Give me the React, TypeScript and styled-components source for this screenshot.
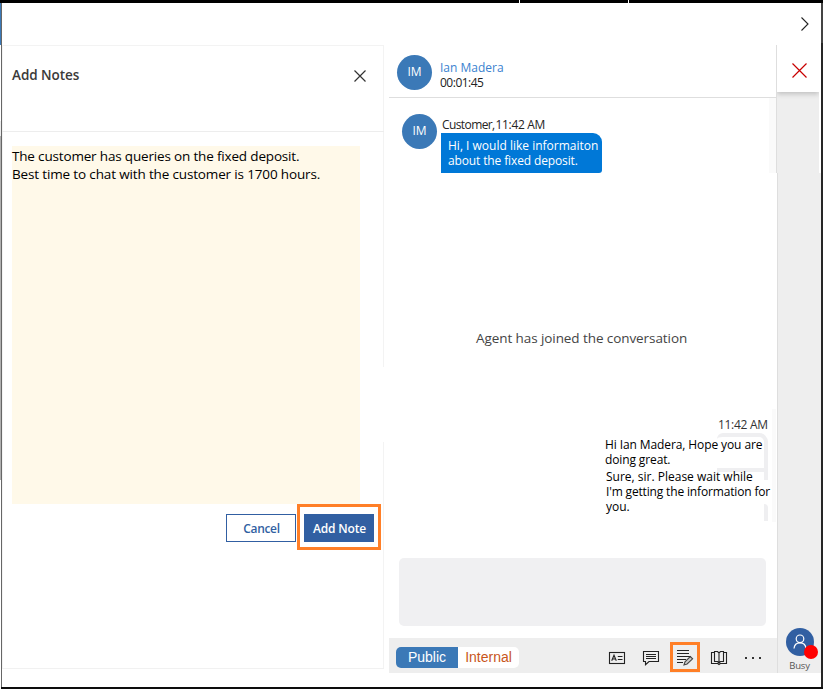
import React from 'react';
import styled, { createGlobalStyle, css } from 'styled-components';

const GlobalStyle = createGlobalStyle`
  *, *::before, *::after { box-sizing: border-box; }
  body { margin: 0; background: #fff; overflow: hidden; }
  button { padding: 0; margin: 0; border: 0; background: none; font: inherit; color: inherit; }
`;

const Window = styled.div`
  width: 823px;
  height: 689px;
  display: flex;
  flex-direction: column;
  background: #fff;
  color: #000;
  font: 12px/16px 'Open Sans', 'Noto Sans', sans-serif;
`;

const TitleStrip = styled.div`
  height: 3px;
  flex: none;
  display: flex;
  gap: 1px;
`;
const StripPart = styled.div<{ $w?: number }>`
  background: #000;
  ${({ $w }) => ($w ? `width: ${$w}px;` : 'flex: 1;')}
`;
const BottomStrip = styled.div`
  height: 2px;
  flex: none;
  margin-left: 1px;
  background: #0d0d0d;
`;

const Body = styled.div`
  height: 684px;
  display: flex;
`;
const LeftEdge = styled.div`
  width: 2px;
  border-right: 1px solid #666;
  background: linear-gradient(#3b79b7 0 42px, #fff 42px 118px, #ececec 118px 133px, #b0b0b0 133px 477px, #fff 477px);
`;
const RightEdge = styled.div`
  width: 2px;
  background: linear-gradient(#444 0 40px, #262626 40px);
`;
const Content = styled.div`
  width: 819px;
  display: flex;
  flex-direction: column;
`;
const TopBar = styled.header`
  height: 42px;
  flex: none;
  display: flex;
  justify-content: flex-end;
  align-items: center;
  padding-right: 10px;
`;
const Workspace = styled.div`
  flex: 1;
  display: flex;
  align-items: flex-start;
`;

const NotesPanel = styled.section`
  width: 382px;
  height: 624px;
  display: flex;
  flex-direction: column;
  border-top: 1px solid #f3f3f3;
  border-bottom: 1px solid #f1f1f1;
  background:
    linear-gradient(#f3f3f3, #f3f3f3) left / 1px 100% no-repeat,
    linear-gradient(#f3f3f3 0 321px, transparent 321px 396px, #f3f3f3 396px) right / 1px 100% no-repeat;
`;
const NotesHeader = styled.header`
  height: 86px;
  flex: none;
  display: flex;
  justify-content: space-between;
  align-items: flex-start;
  padding: 20px 17px 0 10px;
  border-bottom: 1px solid #ededed;
`;
const NotesTitle = styled.h1`
  margin: 0;
  font-size: 13.5px;
  line-height: 18px;
  font-weight: 600;
  letter-spacing: -0.05px;
  color: #3b3a39;
`;
const CloseNotes = styled.button`
  width: 13px;
  height: 13px;
  margin-top: 4px;
  display: flex;
`;
const NotesField = styled.div`
  width: 348px;
  height: 358px;
  margin: 14px 0 0 10px;
  padding-top: 1px;
  background: #fff9e9;
  font-size: 13.5px;
  line-height: 18px;
`;
const Line = styled.div<{ $ls?: number }>`
  white-space: nowrap;
  letter-spacing: ${({ $ls = 0 }) => $ls}px;
`;
const NotesActions = styled.div`
  display: flex;
  justify-content: flex-end;
  align-items: flex-start;
  gap: 1px;
  padding-right: 3px;
`;
const actionButton = css`
  width: 70px;
  height: 28px;
  padding-top: 2px;
  font-size: 12px;
  font-weight: 600;
  white-space: nowrap;
`;
const CancelButton = styled.button`
  ${actionButton}
  margin-top: 10px;
  padding-left: 1px;
  border: 1px solid #315fa2;
  letter-spacing: -0.35px;
  color: #315fa2;
`;
const AddHighlight = styled.div`
  width: 84px;
  height: 46px;
  display: flex;
  justify-content: center;
  padding-top: 7px;
  border: 3px solid #ff7f27;
`;
const AddButton = styled.button`
  ${actionButton}
  padding-left: 1px;
  background: #315fa2;
  letter-spacing: -0.15px;
  color: #fff;
`;

const ChatColumn = styled.section`
  width: 387px;
  height: 628px;
  margin-left: 5px;
  display: flex;
  flex-direction: column;
`;
const ChatHeader = styled.header`
  height: 53px;
  flex: none;
  display: flex;
  align-items: flex-start;
  gap: 8px;
  padding: 10px 0 0 8px;
  border-bottom: 1px solid #dedede;
`;
const Avatar = styled.div`
  width: 35px;
  height: 35px;
  flex: none;
  border-radius: 50%;
  background: #3b79b7;
  color: #fff;
  line-height: 34px;
  text-align: center;
`;
const ContactInfo = styled.div`
  padding-top: 5px;
  line-height: 15px;
`;
const ContactName = styled.div`
  color: #3a82cf;
`;
const Timer = styled.div`
  letter-spacing: -0.5px;
  line-height: 16px;
  color: #222;
`;
const Transcript = styled.div`
  position: relative;
  height: 460px;
  flex: none;
`;
const ScrollTrace = styled.div<{ $top: number; $height: number; $width: number }>`
  position: absolute;
  right: 0;
  top: ${({ $top }) => $top}px;
  width: ${({ $width }) => $width}px;
  height: ${({ $height }) => $height}px;
  background: #fafafa;
`;
const CustomerMessage = styled.article`
  display: flex;
  gap: 4px;
  padding: 16px 0 0 13px;
`;
const MessageMeta = styled.div`
  display: flex;
  height: 19px;
  padding: 3px 0 0 1px;
  gap: 1px;
  color: #252423;
  white-space: nowrap;
`;
const Bubble = styled.div`
  width: 161px;
  height: 40px;
  padding: 5px 0 0 7px;
  border-radius: 0 9px 3px 0;
  background: #0078d7;
  color: #fff;
  line-height: 15px;
`;
const SystemNotice = styled.div`
  margin-top: 156px;
  padding-left: 87px;
  font-size: 13.5px;
  line-height: 18px;
  letter-spacing: -0.08px;
  white-space: nowrap;
  color: #444;
`;
const AgentMessage = styled.article`
  position: relative;
  width: 171px;
  margin: 70px 0 0 216px;
  line-height: 15px;
`;
const AgentTime = styled.div`
  height: 20px;
  padding-left: 113px;
  line-height: 16px;
  letter-spacing: -0.3px;
  color: #333;
  white-space: nowrap;
`;
const AgentText = styled.div<{ $offset?: number }>`
  position: relative;
  margin-left: ${({ $offset = 0 }) => $offset}px;
  padding-top: ${({ $offset = 0 }) => $offset * 2}px;
`;
const BubbleTrace = styled.div`
  position: absolute;
  left: 112px;
  top: 16px;
  width: 51px;
  height: 39px;
  border: solid #efeff1;
  border-width: 4px 4px 4px 0;
  border-radius: 6px 9px 0 0;
`;
const EdgeTrace = styled.div<{ $top: number; $height: number }>`
  position: absolute;
  left: 159px;
  top: ${({ $top }) => $top}px;
  width: 4px;
  height: ${({ $height }) => $height}px;
  border-top-right-radius: 4px;
  background: #efeff1;
`;
const ComposeBox = styled.div`
  width: 367px;
  height: 68px;
  flex: none;
  margin: 0 0 12px 10px;
  border-radius: 5px;
  background: #f0f0f2;
`;
const Toolbar = styled.footer`
  width: 388px;
  height: 35px;
  flex: none;
  display: flex;
  align-items: center;
  padding: 3px 7px 0;
  background: #eee;
`;
const ModeSwitch = styled.div`
  display: flex;
  height: 21px;
  border-radius: 5px;
  overflow: hidden;
  font: 14px/21px 'Liberation Sans', Arial, sans-serif;
`;
const ModeTab = styled.button<{ $active?: boolean }>`
  width: ${({ $active }) => ($active ? 62 : 61)}px;
  background: ${({ $active }) => ($active ? '#3b79b7' : '#fff')};
  color: ${({ $active }) => ($active ? '#fff' : '#c8561c')};
`;
const Tools = styled.div`
  display: flex;
  margin-left: auto;
`;
const ToolButton = styled.button<{ $highlight?: boolean }>`
  width: 30px;
  height: 30px;
  margin: 0 2px;
  display: grid;
  place-items: center;
  ${({ $highlight }) => ($highlight ? 'border: 3px solid #ff7f27;' : 'padding-top: 2px;')}
`;

const Rail = styled.aside`
  width: 45px;
  height: 628px;
  display: flex;
  flex-direction: column;
  align-items: flex-end;
  justify-content: space-between;
  background:
    linear-gradient(#dedede, #dedede) 0 0 / 1px 128px no-repeat,
    linear-gradient(#fff, #fff) right top / 2px 128px no-repeat,
    linear-gradient(#eee, #eee) 1px 0 / 44px 128px no-repeat,
    linear-gradient(#dedede, #dedede) 1px 0 / 1px 100% no-repeat,
    linear-gradient(#eee, #eee) right top / 43px 100% no-repeat;
`;
const EndTile = styled.button`
  width: 42px;
  height: 47px;
  margin-right: 2px;
  display: grid;
  place-items: center;
  padding: 3px 0 0 2px;
  background: #fff;
  box-shadow: 0 2px 5px rgba(0, 0, 0, 0.2);
  clip-path: inset(0 0 -10px 0);
`;
const Presence = styled.div`
  display: flex;
  flex-direction: column;
  align-items: center;
  width: 43px;
  padding-bottom: 1px;
`;
const PresenceAvatar = styled.div`
  position: relative;
  width: 28px;
  height: 28px;
  display: grid;
  place-items: center;
  border-radius: 50%;
  background: #315fa2;
`;
const BusyDot = styled.span`
  position: absolute;
  left: 18px;
  top: 17px;
  width: 14px;
  height: 14px;
  border-radius: 50%;
  background: #f00;
`;
const PresenceLabel = styled.div`
  margin-top: 3px;
  font-size: 9.5px;
  line-height: 13px;
  letter-spacing: -0.2px;
  color: #555;
`;

const Cross = ({ size, color, width }: { size: number; color: string; width: number }) => (
  <svg width={size} height={size} viewBox={`0 0 ${size} ${size}`} stroke={color} strokeWidth={width}>
    <path d={`M.5 .5 L${size - 0.5} ${size - 0.5} M${size - 0.5} .5 L.5 ${size - 0.5}`} />
  </svg>
);

const icon = { fill: 'none', stroke: '#222', strokeWidth: 1.1 };

const ContactCardIcon = () => (
  <svg width="18" height="16" viewBox="0 0 18 16" {...icon}>
    <rect x="1.5" y="2.5" width="15" height="11" />
    <path d="M3.7 10.8 6 5.3 8.3 10.8M4.5 9h3M9.8 6.5h4.7M9.8 9.5h4.7" />
  </svg>
);
const CommentIcon = () => (
  <svg width="18" height="16" viewBox="0 0 18 16" {...icon}>
    <path d="M1.5 1.5h15v10H7L3.5 14.7V11.5h-2zM4 4.5h10M4 6.5h10M4 8.5h10" />
  </svg>
);
const NoteIcon = () => (
  <svg width="18" height="18" viewBox="0 0 18 18" {...icon}>
    <path d="M1 2.5h12M1 5.5h12M1 8.5h14M1 11.5h9M1 14.5h6" />
    <path d="M8 17 9 13.9 14.3 8.6 16.6 10.8 11.1 16z" fill="#ccc" stroke="#444" />
  </svg>
);
const BookIcon = () => (
  <svg width="18" height="16" viewBox="0 0 18 16" {...icon}>
    <path d="M4.5 2.5h-3v11h6.2l1.3 1 1.3-1h6.2v-11h-3" />
    <path d="M4.5 11.5v-10h3L9 3l1.5-1.5h3v10h-3L9 13l-1.5-1.5zM9 3v10" />
  </svg>
);
const MoreIcon = () => (
  <svg width="18" height="16" viewBox="0 0 18 16" fill="#333">
    <path d="M1 7h2v2H1zM8 7h2v2H8zM15 7h2v2h-2z" />
  </svg>
);
const PersonIcon = () => (
  <svg width="16" height="18" viewBox="0 0 16 18" fill="none" stroke="#fff" strokeWidth="1.2">
    <circle cx="8" cy="5.8" r="3.8" />
    <path d="M2 15.5c.3-3.6 2.8-5.7 6-5.7s5.7 2.1 6 5.7" />
  </svg>
);

export default function App() {
  return (
    <>
      <GlobalStyle />
      <Window>
        <TitleStrip>
          <StripPart $w={519} />
          <StripPart $w={108} />
          <StripPart />
        </TitleStrip>
        <Body>
          <LeftEdge />
          <Content>
            <TopBar>
              <svg width="12" height="16" viewBox="0 0 12 16" fill="none" stroke="#222" strokeWidth="1.1">
                <path d="M2.5 1.5 9 8 2.5 14.5" />
              </svg>
            </TopBar>
            <Workspace>
              <NotesPanel>
                <NotesHeader>
                  <NotesTitle>Add Notes</NotesTitle>
                  <CloseNotes aria-label="Close">
                    <Cross size={12} color="#333" width={1.2} />
                  </CloseNotes>
                </NotesHeader>
                <NotesField>
                  <Line $ls={-0.17}>The customer has queries on the fixed deposit.</Line>
                  <Line $ls={-0.15}>Best time to chat with the customer is 1700 hours.</Line>
                </NotesField>
                <NotesActions>
                  <CancelButton>Cancel</CancelButton>
                  <AddHighlight>
                    <AddButton>Add Note</AddButton>
                  </AddHighlight>
                </NotesActions>
              </NotesPanel>

              <ChatColumn>
                <ChatHeader>
                  <Avatar>IM</Avatar>
                  <ContactInfo>
                    <ContactName>Ian Madera</ContactName>
                    <Timer>00:01:45</Timer>
                  </ContactInfo>
                </ChatHeader>
                <Transcript>
                  <ScrollTrace $top={0} $height={75} $width={7} />
                  <ScrollTrace $top={311} $height={113} $width={4} />
                  <CustomerMessage>
                    <Avatar>IM</Avatar>
                    <div>
                      <MessageMeta>
                        <Line $ls={-0.6}>Customer,</Line>
                        <Line $ls={-0.35}>11:42 AM</Line>
                      </MessageMeta>
                      <Bubble>
                        <Line>Hi, I would like informaiton</Line>
                        <Line $ls={-0.13}>about the fixed deposit.</Line>
                      </Bubble>
                    </div>
                  </CustomerMessage>
                  <SystemNotice>Agent has joined the conversation</SystemNotice>
                  <AgentMessage>
                    <BubbleTrace />
                    <EdgeTrace $top={49} $height={14} />
                    <EdgeTrace $top={87} $height={17} />
                    <AgentTime>11:42 AM</AgentTime>
                    <AgentText>
                      <Line $ls={-0.1}>Hi Ian Madera, Hope you are</Line>
                      <Line $ls={-0.12}>doing great.</Line>
                    </AgentText>
                    <AgentText $offset={1}>
                      <Line>Sure, sir. Please wait while</Line>
                      <Line $ls={-0.16}>I'm getting the information for</Line>
                      <Line>you.</Line>
                    </AgentText>
                  </AgentMessage>
                </Transcript>
                <ComposeBox />
                <Toolbar>
                  <ModeSwitch>
                    <ModeTab $active>Public</ModeTab>
                    <ModeTab>Internal</ModeTab>
                  </ModeSwitch>
                  <Tools>
                    <ToolButton><ContactCardIcon /></ToolButton>
                    <ToolButton><CommentIcon /></ToolButton>
                    <ToolButton $highlight><NoteIcon /></ToolButton>
                    <ToolButton><BookIcon /></ToolButton>
                    <ToolButton><MoreIcon /></ToolButton>
                  </Tools>
                </Toolbar>
              </ChatColumn>

              <Rail>
                <EndTile aria-label="End conversation">
                  <Cross size={15} color="#c80000" width={1.2} />
                </EndTile>
                <Presence>
                  <PresenceAvatar>
                    <PersonIcon />
                    <BusyDot />
                  </PresenceAvatar>
                  <PresenceLabel>Busy</PresenceLabel>
                </Presence>
              </Rail>
            </Workspace>
          </Content>
          <RightEdge />
        </Body>
        <BottomStrip />
      </Window>
    </>
  );
}
